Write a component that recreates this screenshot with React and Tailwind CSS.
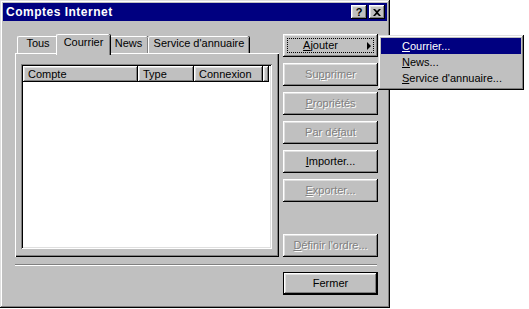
const raised = 'bg-[#c0c0c0] shadow-[inset_-1px_-1px_0_#000,inset_1px_1px_0_#fff,inset_-2px_-2px_0_#808080,inset_2px_2px_0_#dfdfdf]'
const disabledText = 'text-[#808080] [text-shadow:1px_1px_0_#fff]'

function Btn({ children, disabled, className = '' }) {
  return (
    <div className={`h-[23px] w-[95px] flex items-center justify-center ${raised} ${disabled ? disabledText : 'text-black'} ${className}`}>
      {children}
    </div>
  )
}

function Tab({ label, selected, w }) {
  return (
    <div
      className={`relative flex justify-center bg-[#c0c0c0] border-l border-t border-white rounded-tl-[2px] rounded-tr-[2px] shadow-[inset_-1px_0_0_#808080,1px_0_0_#000] ${selected ? 'h-[21px] pt-[2px] -mb-[2px] z-10 -mx-[2px]' : 'h-[17px] pt-[1px]'}`}
      style={{ width: w }}
    >
      {label}
    </div>
  )
}

function Header({ label, w }) {
  return (
    <div className={`h-[16px] flex items-center pl-[5px] ${raised}`} style={{ width: w }}>
      {label}
    </div>
  )
}

export default function App() {
  return (
    <div className="w-[529px] h-[309px] bg-white relative text-[11px] leading-none text-black" style={{ fontFamily: '"Liberation Sans", Arial, sans-serif' }}>
      <div className="w-[390px] h-[308px] bg-[#c0c0c0] p-[3px] flex flex-col shadow-[inset_-1px_-1px_0_#000,inset_1px_1px_0_#dfdfdf,inset_-2px_-2px_0_#808080,inset_2px_2px_0_#fff]">
        {/* title bar */}
        <div className="h-[18px] bg-[#000080] flex items-center pl-[3px] pr-[2px]">
          <span className="text-white font-bold text-[12px] tracking-[0.5px] flex-1">Comptes Internet</span>
          <div className={`w-[16px] h-[14px] flex items-center justify-center font-bold text-[11px] ${raised}`}>?</div>
          <div className={`w-[16px] h-[14px] ml-[2px] flex items-center justify-center ${raised}`}>
            <svg width="8" height="7" viewBox="0 0 8 7">
              <path d="M0 0h2l2 2 2-2h2L5 3.5 8 7H6L4 5 2 7H0l3-3.5z" fill="#000" />
            </svg>
          </div>
        </div>

        <div className="flex-1 flex flex-col pl-[12px] pr-[9px] pt-[13px]">
          <div className="flex gap-[4px] h-[223px]">
            {/* left: tabs */}
            <div className="w-[264px] flex flex-col">
              <div className="h-[19px] flex items-end pl-[2px]">
                <Tab label="Tous" w={41} />
                <Tab label="Courrier" selected w={54} />
                <Tab label="News" w={40} />
                <Tab label="Service d'annuaire" w={101} />
              </div>
              <div className="flex-1 bg-[#c0c0c0] border-l border-t border-white shadow-[inset_-1px_-1px_0_#000,inset_-2px_-2px_0_#808080] pt-[10px] pl-[5px] pr-[7px] pb-[8px] flex">
                <div className="flex-1 bg-white p-[2px] shadow-[inset_1px_1px_0_#808080,inset_-1px_-1px_0_#fff,inset_2px_2px_0_#000,inset_-2px_-2px_0_#dfdfdf]">
                  <div className="flex">
                    <Header label="Compte" w={115} />
                    <Header label="Type" w={56} />
                    <Header label="Connexion" w={69} />
                    <Header label="" w={6} />
                  </div>
                </div>
              </div>
            </div>

            {/* right: buttons */}
            <div className="flex flex-col gap-[6px]">
              <Btn className="relative">
                <div className="absolute inset-[4px] border border-dotted border-black" />
                <span className="ml-[-20px]"><u>A</u>jouter</span>
                <svg className="absolute right-[6px] top-[8px]" width="5" height="8" viewBox="0 0 5 8">
                  <path d="M0 0L4 4L0 8z" fill="#000" />
                </svg>
              </Btn>
              <Btn disabled>Su<u>p</u>primer</Btn>
              <Btn disabled><u>P</u>ropriétés</Btn>
              <Btn disabled>Par dé<u>f</u>aut</Btn>
              <Btn><u>I</u>mporter...</Btn>
              <Btn disabled><u>E</u>xporter...</Btn>
              <Btn disabled className="mt-auto"><u>D</u>éfinir l'ordre...</Btn>
            </div>
          </div>

          <div className="mt-[7px] h-[2px] border-t border-[#808080] border-b border-b-white w-[362px]" />

          <div className="mt-[6px] flex justify-end">
            <div className="w-[95px] h-[23px] border border-black">
              <div className={`w-full h-full flex items-center justify-center ${raised}`}>Fermer</div>
            </div>
          </div>
        </div>
      </div>

      {/* dropdown menu */}
      <div className="absolute left-[378px] top-[35px] w-[146px] h-[55px] bg-[#c0c0c0] p-[3px] shadow-[inset_-1px_-1px_0_#000,inset_1px_1px_0_#dfdfdf,inset_-2px_-2px_0_#808080,inset_2px_2px_0_#fff]">
        <div className="h-[16px] bg-[#000080] text-white flex items-center pl-[21px]"><u>C</u>ourrier...</div>
        <div className="h-[16px] flex items-center pl-[21px]"><u>N</u>ews...</div>
        <div className="h-[16px] flex items-center pl-[21px]"><u>S</u>ervice d'annuaire...</div>
      </div>
    </div>
  )
}
